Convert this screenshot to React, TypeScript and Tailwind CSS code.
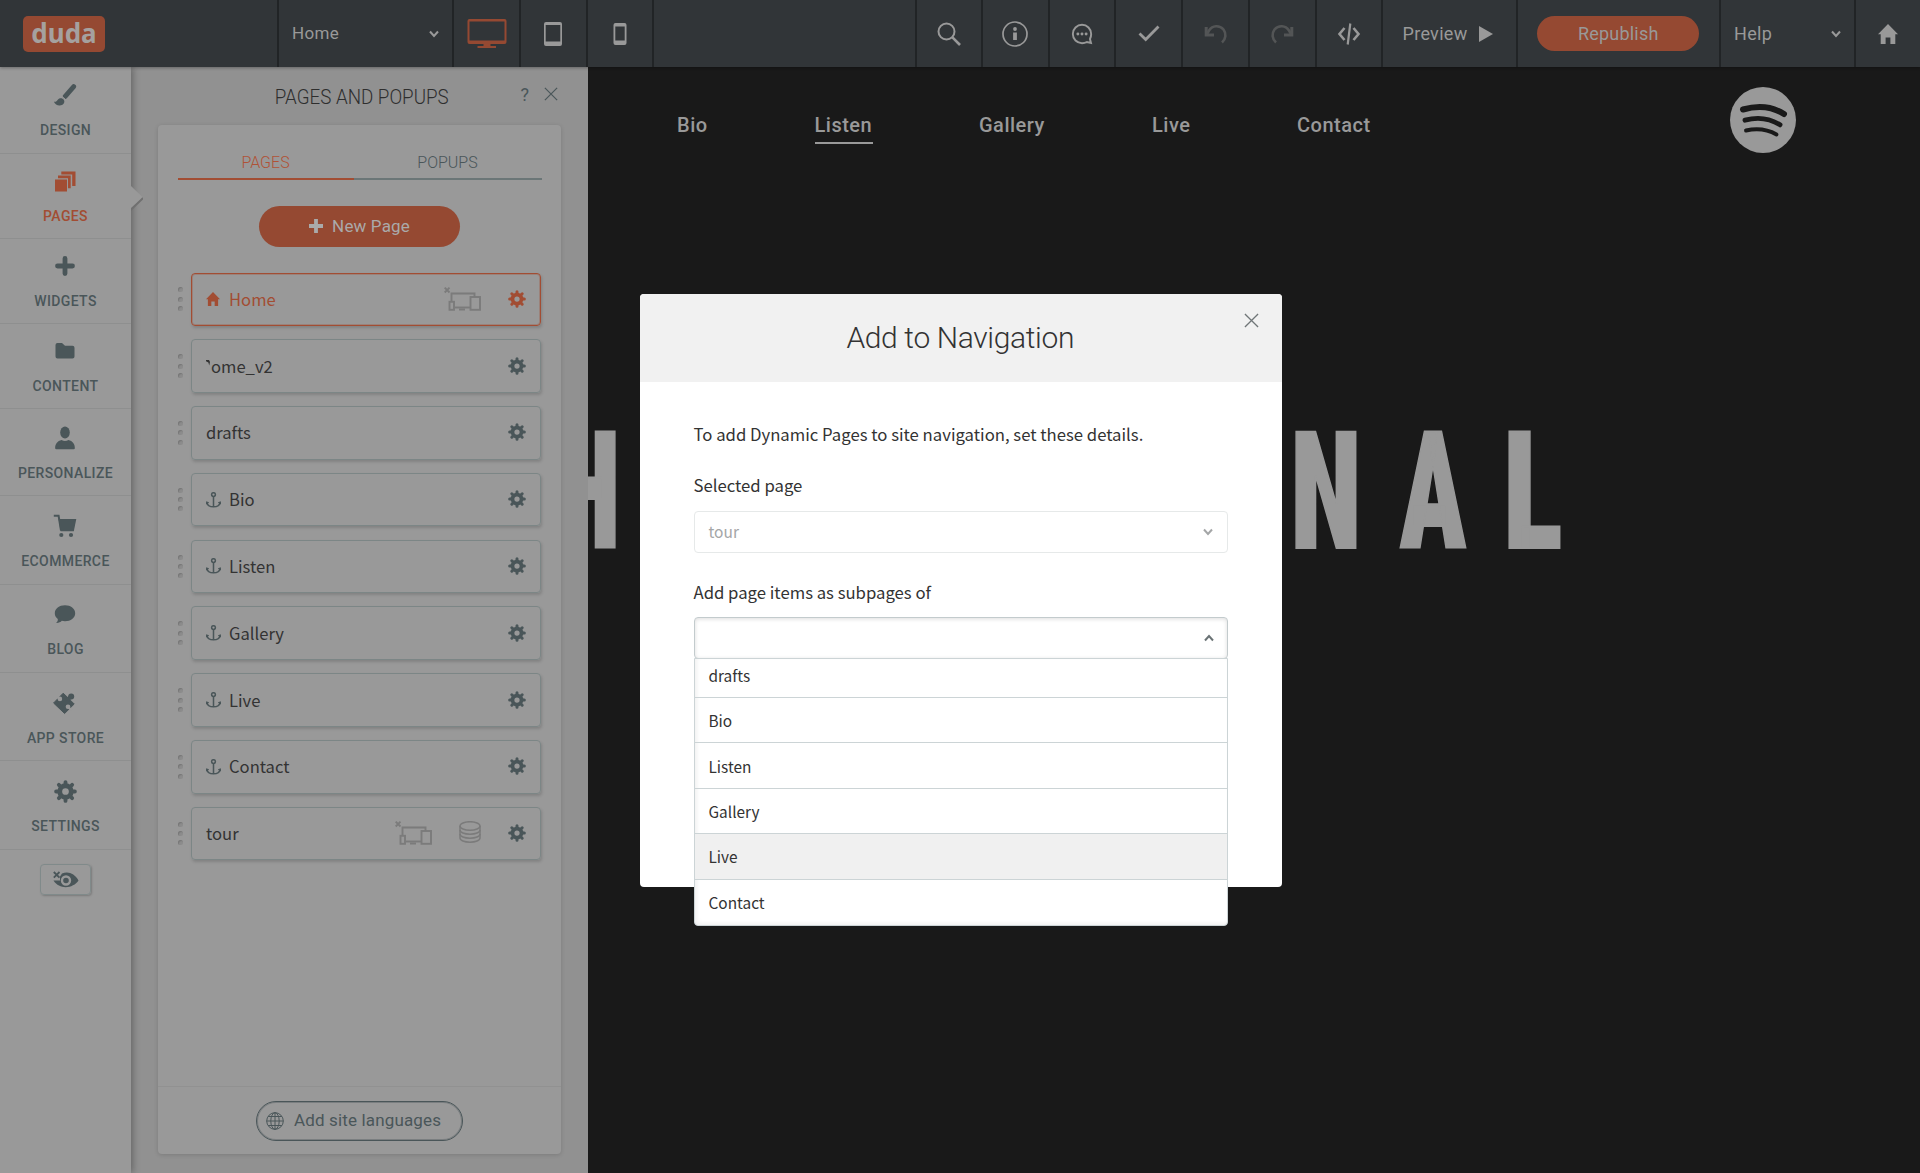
import { useState, type ReactNode } from 'react'

const ROBOTO = "font-['Roboto','Liberation_Sans',sans-serif]"
const SOURCE = "font-['Noto_Sans_CJK_SC','Noto_Sans',sans-serif]"

/* ---------- icons ---------- */

function Gear({ className = '' }: { className?: string }) {
  return (
    <svg viewBox="0 0 24 24" className={className} fill="none" stroke="currentColor">
      <circle cx="12" cy="12" r="6" strokeWidth="5" />
      {[0, 45, 90, 135].map(a => (
        <g key={a} transform={`rotate(${a} 12 12)`} strokeWidth="4" strokeLinecap="round">
          <path d="M12 2.2V5M12 19v2.8" />
        </g>
      ))}
    </svg>
  )
}

function HouseIcon({ className = '' }: { className?: string }) {
  return (
    <svg viewBox="0 0 20 20" className={className} fill="currentColor">
      <path d="M10 0 20 10.2H17.3V20H12.4V13.5H7.6V20H2.7V10.2H0Z" />
    </svg>
  )
}

function Anchor({ className = '' }: { className?: string }) {
  return (
    <svg viewBox="0 0 15 16" className={className} fill="none" stroke="currentColor" strokeWidth="1.5">
      <circle cx="7.5" cy="2.6" r="1.9" />
      <path d="M7.5 4.5V15M1 10.5C1.3 13.3 4 14.8 7.5 14.8S13.7 13.3 14 10.5" />
      <path d="M.5 12.2 .7 10 2.8 10.7M14.5 12.2 14.3 10 12.2 10.7" strokeWidth="1.2" />
    </svg>
  )
}

function Close({ className = '' }: { className?: string }) {
  return (
    <svg viewBox="0 0 16 16" className={className} fill="none" stroke="currentColor" strokeWidth="1.4">
      <path d="M1 1 15 15M15 1 1 15" />
    </svg>
  )
}

function Chevron({ className = '' }: { className?: string }) {
  return (
    <svg viewBox="0 0 10 8" className={className} fill="none" stroke="currentColor" strokeWidth="2">
      <path d="M1 1.5 5 6 9 1.5" />
    </svg>
  )
}

function Devices({ className = '' }: { className?: string }) {
  return (
    <svg viewBox="0 0 37 24" className={className} fill="none" stroke="currentColor" strokeWidth="1.9">
      <path d="M.7 .7 5.5 5.5M5.500 .7 .7 5.5" />
      <path d="M7.5 14V6.5H30.5V10" />
      <path d="M10.5 20.5H26" />
      <rect x="5.5" y="14.8" width="4.5" height="8" />
      <rect x="26.5" y="10" width="9.5" height="12.8" />
      <path d="M15 22.5H21" strokeWidth="2" />
    </svg>
  )
}

function Database({ className = '' }: { className?: string }) {
  return (
    <svg viewBox="0 0 22 22" className={className} fill="none" stroke="currentColor" strokeWidth="1.5">
      <ellipse cx="11" cy="5" rx="10" ry="4.3" />
      <path d="M1 5V17C1 19.4 5.5 21.2 11 21.2S21 19.4 21 17V5" />
      <path d="M1 9C1 11.4 5.5 13.2 11 13.2S21 11.4 21 9M1 13C1 15.4 5.5 17.2 11 17.2S21 15.4 21 13" />
    </svg>
  )
}

const sideIcons: Record<string, ReactNode> = {
  design: (
    <>
      <path d="M20.7 3.6 12.2 13.4" stroke="currentColor" strokeWidth="4.8" strokeLinecap="round" />
      <path d="M.9 18.8C3.5 19 4.1 17.8 5 16.5 6.5 14.5 9.7 14.7 11 17 12.2 19.8 10 22.3 6.8 22.5 4 22.6 2 21.3 .9 18.8Z" />
      <path d="M8.2 12.6 13.500 17.4" stroke="#999" strokeWidth="1" />
    </>
  ),
  pages: (
    <>
      <rect x="2" y="10.5" width="12" height="12" />
      <path d="M5 6.5H17.7V19.3H15V9.2H5Z" />
      <path d="M8.3 2.5H22.5V17H19.2V5.4H8.3Z" />
    </>
  ),
  widgets: <path d="M12 4.500V19.500M4.500 12H19.500" stroke="currentColor" strokeWidth="4.800" strokeLinecap="round" />,
  content: <path d="M2.5 6Q2.5 4 4.5 4H9L12 6.8H19.5Q21.5 6.8 21.5 8.8V17.5Q21.5 19.5 19.5 19.5H4.5Q2.5 19.5 2.5 17.5Z" />,
  personalize: (
    <>
      <ellipse cx="12" cy="6.5" rx="4.8" ry="6" />
      <path d="M2.2 22.5C1.8 18.5 4.5 14.8 8.6 14 10.5 15.3 13.5 15.3 15.4 14 19.5 14.8 22.2 18.5 21.8 22.5Q21.7 23.3 20.8 23.3H3.2Q2.3 23.3 2.2 22.5Z" />
    </>
  ),
  ecommerce: (
    <>
      <path d="M.8 1.8H5.6L8 16.5" fill="none" stroke="currentColor" strokeWidth="2" />
      <path d="M5.6 5H23.3L20.8 17.2H7.6Z" />
      <circle cx="8.3" cy="21" r="2.1" />
      <circle cx="18" cy="21" r="2.1" />
    </>
  ),
  blog: <path d="M12 3.2C17.7 3.2 22.2 6.7 22.2 11.2S17.7 19.2 12 19.2Q10.2 19.2 8.8 18.8C7.5 20.2 5.5 21.2 3 21 4.3 20 5 18.8 4.8 17 2.900 15.5 1.800 13.5 1.800 11.200 1.800 6.700 6.300 3.200 12 3.200Z" />,
  store: (
    <>
      <path d="M.6 12 10.200 2.200 15.200 7 17.400 9.200 21.200 13 11.600 22.500Z" stroke="currentColor" strokeWidth="1" strokeLinejoin="round" />
      <path d="M14 9.500 17.500 5.800" stroke="currentColor" strokeWidth="4" />
      <circle cx="18.200" cy="5.400" r="3" />
      <circle cx="6.900" cy="7.900" r="2.300" fill="#999" />
      <path d="M3.500 5 6.500 8" stroke="#999" strokeWidth="2.200" />
      <circle cx="15" cy="15.800" r="2.300" fill="#999" />
      <path d="M15 15.800 18.500 19.300" stroke="#999" strokeWidth="2.200" />
    </>
  ),
}

function SideIcon({ name }: { name: string }) {
  if (name === 'settings') return <Gear className="size-[23px]" />
  return <svg viewBox="0 0 24 24" className="-ml-px size-6" fill="currentColor">{sideIcons[name]}</svg>
}

/* ---------- top bar ---------- */

function Cell({ width, children, className = 'justify-center' }: { width: string; children?: ReactNode; className?: string }) {
  return (
    <div className={`flex h-full shrink-0 items-center border-l-2 border-[#212426] ${width} ${className}`}>
      {children}
    </div>
  )
}

function TopBar() {
  return (
    <header className={`relative z-10 flex h-[67px] shrink-0 items-center bg-[#313538] text-lg tracking-[0.3px] text-[#999] shadow-[0_1px_3px_rgba(0,0,0,0.3)] ${ROBOTO}`}>
      <div className="flex w-[277px] items-center pl-[23px]">
        <div className="flex h-[36px] w-[82px] items-center justify-center rounded-[5px] bg-[#954932] font-['Noto_Sans',sans-serif] text-[26px] font-bold tracking-normal text-[#a5a19f]">
          duda
        </div>
      </div>
      <Cell width="w-[175px]" className="justify-between pr-[13px] pl-[13px]">
        <span className="text-[17px]">Home</span>
        <Chevron className="h-2 w-2.5" />
      </Cell>
      <Cell width="w-[67px]">
        <svg viewBox="0 0 40 30" className="h-[30px] w-10 text-[#954932]" fill="currentColor">
          <path d="M2.5 0H37.5Q39.5 0 39.5 2V23Q39.5 25 37.5 25H23.5V27H29V29H10.5V27H16.5V25H2.5Q.5 25 .5 23V2Q.5 0 2.5 0ZM2.5 2.5V21.5H37.5V2.5Z" fillRule="evenodd" />
        </svg>
      </Cell>
      <Cell width="w-[66.500px]">
        <svg viewBox="0 0 20 24" className="h-6 w-5" fill="currentColor">
          <path d="M3 0H17Q19 0 19 2V22Q19 24 17 24H3Q1 24 1 22V2Q1 0 3 0ZM2.7 3V19.5H17.3V3Z" fillRule="evenodd" />
        </svg>
      </Cell>
      <Cell width="w-[66px]">
        <svg viewBox="0 0 14 24" className="h-6 w-3.5" fill="currentColor">
          <path d="M2.5 1H11.5Q13.5 1 13.5 3V21Q13.5 23 11.5 23H2.5Q.5 23 .5 21V3Q.5 1 2.5 1ZM2.3 4.5V18.5H11.7V4.5Z" fillRule="evenodd" />
        </svg>
      </Cell>
      <Cell width="flex-1" />
      <Cell width="w-[66px]">
        <svg viewBox="0 0 24 24" className="size-6" fill="none" stroke="currentColor" strokeWidth="2">
          <circle cx="9.5" cy="9.5" r="8" />
          <path d="M15.2 15.2 23 23" strokeWidth="2.6" />
        </svg>
      </Cell>
      <Cell width="w-[66.500px]">
        <svg viewBox="0 0 26 26" className="size-[26px]" fill="none" stroke="currentColor">
          <circle cx="13" cy="13" r="12" strokeWidth="1.7" />
          <path d="M13 11.5V19" strokeWidth="3.8" />
          <circle cx="13" cy="8" r="1.9" fill="currentColor" stroke="none" />
        </svg>
      </Cell>
      <Cell width="w-[66.500px]">
        <svg viewBox="0 0 24 24" className="size-[22px]" fill="none" stroke="currentColor" strokeWidth="2.1">
          <path d="M22 12A10 10 0 1 0 12 22Q15 22 17.3 20.7L21.8 21.8 20.7 17.5Q22 15 22 12Z" />
          <g fill="currentColor" stroke="none">
            <circle cx="7.5" cy="12" r="1.6" />
            <circle cx="12" cy="12" r="1.6" />
            <circle cx="16.5" cy="12" r="1.6" />
          </g>
        </svg>
      </Cell>
      <Cell width="w-[67px]">
        <svg viewBox="0 0 22 17" className="h-[17px] w-[22px]" fill="none" stroke="currentColor" strokeWidth="2.8">
          <path d="M1.5 8.5 7.7 14.5 20.5 1.5" />
        </svg>
      </Cell>
      <Cell width="w-[67px]">
        <svg viewBox="0 0 24 20" className="h-5 w-6 text-[#535556]" fill="none" stroke="currentColor" strokeWidth="2.6">
          <path d="M18 18.5C22 15 22.5 9.5 19.5 5.5 15.5 .8 8.500 1.2 5 6.5L3 10" />
          <path d="M2.2 3V11H10" strokeWidth="3" />
        </svg>
      </Cell>
      <Cell width="w-[66.500px]">
        <svg viewBox="0 0 24 20" className="h-5 w-6 -scale-x-100 text-[#535556]" fill="none" stroke="currentColor" strokeWidth="2.6">
          <path d="M18 18.5C22 15 22.5 9.5 19.5 5.5 15.5 .8 8.500 1.2 5 6.5L3 10" />
          <path d="M2.2 3V11H10" strokeWidth="3" />
        </svg>
      </Cell>
      <Cell width="w-[66.500px]">
        <svg viewBox="0 0 24 22" className="h-[22px] w-6" fill="none" stroke="currentColor" strokeWidth="2.6">
          <path d="M7.5 5 2.5 11 7.5 17M16.5 5 21.5 11 16.5 17" />
          <path d="M13.3 .5 10.7 21.5" strokeWidth="2.2" />
        </svg>
      </Cell>
      <Cell width="w-[134.500px]" className="pl-[19.500px]">
        <span>Preview</span>
        <svg viewBox="0 0 14 16" className="ml-[11px] h-4 w-3.5" fill="currentColor"><path d="M0 0 14 8 0 16Z" /></svg>
      </Cell>
      <Cell width="w-[203.500px]">
        <button className="h-[35px] w-[162px] rounded-full bg-[#954932] text-lg tracking-[0.2px]">Republish</button>
      </Cell>
      <Cell width="w-[135px]" className="justify-between pr-[13px] pl-[13px]">
        <span>Help</span>
        <Chevron className="h-2 w-2.5" />
      </Cell>
      <Cell width="w-[66px]">
        <HouseIcon className="size-5" />
      </Cell>
    </header>
  )
}

/* ---------- left rail ---------- */

const rail = [
  { id: 'design', label: 'DESIGN', size: 'h-[86.500px] pt-[16px]' },
  { id: 'pages', label: 'PAGES', size: 'h-[85px] pt-[15px]' },
  { id: 'widgets', label: 'WIDGETS', size: 'h-[85px] pt-[15px]' },
  { id: 'content', label: 'CONTENT', size: 'h-[85px] pt-[15px]' },
  { id: 'personalize', label: 'PERSONALIZE', size: 'h-[87px] pt-[17px]' },
  { id: 'ecommerce', label: 'ECOMMERCE', size: 'h-[89px] pt-[18.500px]' },
  { id: 'blog', label: 'BLOG', size: 'h-[88px] pt-[17px]' },
  { id: 'store', label: 'APP STORE', size: 'h-[88.500px] pt-[18px]' },
  { id: 'settings', label: 'SETTINGS', size: 'h-[88.500px] pt-[19px]' },
]

function Rail() {
  const [active, setActive] = useState('pages')
  return (
    <nav className={`relative z-[5] flex w-[131px] shrink-0 flex-col items-center bg-[#999] shadow-[2px_0_7px_rgba(0,0,0,0.3)] ${ROBOTO}`}>
      {rail.map(item => (
        <button
          key={item.id}
          onClick={() => setActive(item.id)}
          className={`flex w-full flex-col items-center border-b border-[#8e8f8f] ${item.size} ${active === item.id ? 'text-[#a24d33]' : 'text-[#4a5659]'}`}
        >
          <SideIcon name={item.id} />
          <span className="mt-[13px] text-sm leading-5 font-medium tracking-[0.38px]">{item.label}</span>
        </button>
      ))}
      <button className="mt-[14.500px] flex h-[31px] w-[51px] items-center justify-center rounded border border-[#808a8a] text-[#4a5659] shadow-[1px_1px_2px_rgba(0,0,0,0.2)]">
        <svg viewBox="0 0 26 18" className="h-[18px] w-[26px]" fill="none" stroke="currentColor">
          <path d="M9 2.5C15.5 0 21.5 2.5 25.5 9.5 20.5 17.2 7 19.5 .5 9.5H7V5.500Z" fill="currentColor" stroke="none" />
          <path d="M.8 1 6.5 6.7M6.500 1 .8 6.7" strokeWidth="1.8" />
          <circle cx="13" cy="9.500" r="4" strokeWidth="2.400" stroke="#999" />
        </svg>
      </button>
      {/* pointer of the active tab */}
      <svg viewBox="0 0 12 26" className="absolute top-[118px] left-[131px] h-[26px] w-3">
        <path d="M-1 25.500 12 13" stroke="#707070" strokeWidth="2" />
        <path d="M-1 0 11.5 12-1 24Z" fill="#999" />
      </svg>
    </nav>
  )
}

/* ---------- pages panel ---------- */

type Page = { name: string; icon?: 'home' | 'anchor'; devices?: boolean; data?: boolean; clipped?: boolean }

const pages: Page[] = [
  { name: 'Home', icon: 'home', devices: true },
  { name: 'ome_v2', clipped: true },
  { name: 'drafts' },
  { name: 'Bio', icon: 'anchor' },
  { name: 'Listen', icon: 'anchor' },
  { name: 'Gallery', icon: 'anchor' },
  { name: 'Live', icon: 'anchor' },
  { name: 'Contact', icon: 'anchor' },
  { name: 'tour', devices: true, data: true },
]

function PageRow({ page }: { page: Page }) {
  const home = page.icon === 'home'
  return (
    <li className="flex h-[53.500px] items-center">
      <div className="flex w-[13.500px] flex-col gap-[4.300px]">
        {[0, 1, 2].map(i => (
          <span key={i} className="size-[5px] rounded-full bg-[#8c8c8c] shadow-[inset_1px_1px_1px_#777]" />
        ))}
      </div>
      <div className={`flex h-full flex-1 items-center rounded border pr-[14.500px] pl-3.5 shadow-[1px_2px_3px_rgba(0,0,0,0.15)] ${home ? 'border-[#a24d33] text-[#a24d33] ring-1 ring-[#a24d33]/30 ring-inset' : 'border-[#7c8686] text-[#333]'}`}>
        {home && <HouseIcon className="mr-[9px] size-3.5" />}
        {page.icon === 'anchor' && <Anchor className="mr-2 h-4 w-[15px] text-[#4a5659]" />}
        {page.clipped && <span className="mr-px mb-[7px] h-[6px] w-[4px] bg-[#333] [clip-path:polygon(0_0,70%_0,100%_40%,80%_100%,60%_50%,0_30%)]" />}
        <span className={`-mt-px text-[16.600px] leading-6 ${SOURCE}`}>{page.name}</span>
        <span className="flex-1" />
        {page.devices && <Devices className="-mt-px mr-[27px] h-6 w-[37px] text-[#7b7b7b]" />}
        {page.data && <Database className="-mt-[3px] mr-[26.500px] h-[22px] w-[22px] text-[#7b7b7b]" />}
        <Gear className={`-mt-px size-[18px] ${home ? '' : 'text-[#4a5659]'}`} />
      </div>
    </li>
  )
}

function PagesPanel() {
  return (
    <section className={`flex w-[457px] shrink-0 flex-col bg-[#919191] pr-[27px] pb-[19px] pl-[27px] ${ROBOTO}`}>
      <div className="flex h-[58px] items-center">
        <div className="w-[45px]" />
        <h2 className="flex-1 scale-x-[0.915] pt-0.5 text-center text-[20.500px] font-light whitespace-nowrap text-[#2e2e2e]">PAGES AND POPUPS</h2>
        <span className="pb-1 text-[18px] text-[#4a5659]">?</span>
        <Close className="mr-[3px] mb-1 ml-[15px] h-3.5 w-3.5 text-[#4a5659]" />
      </div>
      <div className="flex flex-1 flex-col rounded bg-[#999] shadow-[0_1px_4px_rgba(0,0,0,0.15)]">
        <div className="mt-5 ml-[19.500px] flex w-[364px] text-base font-light">
          <button className="h-[35px] w-[176px] border-b-2 border-[#a24d33] pt-0.5 text-[#b05236]">PAGES</button>
          <button className="h-[35px] flex-1 border-b-2 border-[#6b7677] pt-0.5 text-[#4a5659]">POPUPS</button>
        </div>
        <button className="mt-[26px] ml-[101px] flex h-[40.500px] w-[201px] items-center justify-center rounded-full bg-[#954932] text-[17px] tracking-[0.15px] text-[#aaa]">
          <svg viewBox="0 0 14 14" className="mr-[9px] size-3.5"><path d="M7 0V14M0 7H14" stroke="currentColor" strokeWidth="3.8" /></svg>
          New Page
        </button>
        <ul className="mt-[26px] ml-[19.500px] flex w-[363.500px] flex-col gap-[13.300px]">
          {pages.map(p => <PageRow key={p.name} page={p} />)}
        </ul>
        <div className="mt-auto flex h-[68.500px] justify-center border-t border-[#919191] pt-[14px]">
          <button className="flex h-10 w-[207px] items-center rounded-full border border-[#4a5659] pl-[9px] text-[17px] tracking-[0.15px] text-[#4a5659] ring-1 ring-[#4a5659]/40 ring-inset">
            <svg viewBox="0 0 18 18" className="mr-2.5 size-[18px]" fill="none" stroke="currentColor">
              <circle cx="9" cy="9" r="8.3" />
              <ellipse cx="9" cy="9" rx="4.2" ry="8.3" />
              <path d="M9 .7V17.3M.7 9H17.3M2.2 4.5H15.8M2.2 13.5H15.8" />
            </svg>
            Add site languages
          </button>
        </div>
      </div>
    </section>
  )
}

/* ---------- site canvas ---------- */

function SitePreview() {
  return (
    <main className={`flex min-w-0 flex-1 flex-col overflow-hidden bg-[#191919] text-[#999] ${ROBOTO}`}>
      <div className="flex pt-[19.500px] pr-[124.500px] pl-[89px]">
        <nav className="mt-[26px] flex h-8 flex-1 text-xl leading-6 font-medium tracking-[0.5px]">
          <a className="w-[137.500px]">Bio</a>
          <a className="mr-[106px] h-[31px] w-[58.500px] border-b-2 border-[#999]">Listen</a>
          <a className="w-[173px]">Gallery</a>
          <a className="w-[145px]">Live</a>
          <a>Contact</a>
        </nav>
        <svg viewBox="0 0 66 66" className="size-[66px]" fill="none" stroke="#191919" strokeLinecap="round">
          <circle cx="33" cy="33" r="33" fill="#999" stroke="none" />
          <path d="M13 22.5C28 18.2 43 20 54 27" strokeWidth="6" />
          <path d="M15 33.2C28 29.6 40 31.5 50 37.8" strokeWidth="4.9" />
          <path d="M16 43.5C27 41 37 42 46.5 47.5" strokeWidth="3.9" />
        </svg>
      </div>
      <h1 className="mt-[249.500px] -ml-[53px] flex text-[164px] leading-[180px] font-black [-webkit-text-stroke:2px_#999] [font-stretch:75%]">
        <span className="w-[100px] scale-x-[0.71] text-center">H</span>
        <span className="ml-[641px] w-[100px] scale-x-[0.71] text-center">N</span>
        <span className="ml-[5px] w-[104px] scale-x-[0.67] text-center">A</span>
        <span className="-ml-[2.500px] w-[100px] scale-x-[0.755] text-center">L</span>
      </h1>
    </main>
  )
}

/* ---------- modal ---------- */

const options = ['drafts', 'Bio', 'Listen', 'Gallery', 'Live', 'Contact']

function NavigationModal() {
  const [hovered, setHovered] = useState('Live')
  return (
    <div className={`absolute top-[293.500px] left-[640px] z-20 flex h-[593.500px] w-[641.500px] flex-col rounded bg-white text-[#333] ${SOURCE}`}>
      <div className="flex h-[88px] shrink-0 rounded-t bg-[#f1f1f1]">
        <div className="w-[47px]" />
        <h3 className={`flex-1 pt-6 text-center text-[30px] leading-[40px] font-light tracking-[-0.350px] ${ROBOTO}`}>Add to Navigation</h3>
        <Close className="mt-[19.500px] mr-[23px] ml-[10px] size-[15px] text-[#707678]" />
      </div>
      <div className="flex flex-col px-[53.500px] text-[16.720px] leading-6">
        <p className="mt-10 whitespace-nowrap">To add Dynamic Pages to site navigation, set these details.</p>
        <label className="mt-[27px]">Selected page</label>
        <div className="mt-[14px] flex h-[42.500px] items-center justify-between rounded border border-[#e6e9e9] px-[14px] text-[15.500px] text-[#a4a6a7]">
          <span className="-mt-px">tour</span>
          <Chevron className="h-2 w-2.5" />
        </div>
        <label className="mt-[26.500px]">Add page items as subpages of</label>
        <div className="relative mt-[13.500px] flex h-[42px] items-center justify-end rounded border border-[#c3cbcd] pr-[13px] shadow-[inset_0_1px_4px_rgba(0,0,0,0.14)]">
          <Chevron className="h-2 w-2.5 -scale-y-100 text-[#6a7375]" />
          <ul className="absolute top-[40px] -right-px -left-px rounded-b border border-[#ccd4d6] bg-white text-[15.400px] shadow-[inset_2px_-2px_4px_rgba(0,0,0,0.06)]">
            {options.map(o => (
              <li
                key={o}
                onMouseEnter={() => setHovered(o)}
                className={`flex items-center border-b border-[#ccd4d6] pl-[14px] last:border-b-0 ${o === 'drafts' ? 'h-[39px] pb-[6px]' : 'h-[45.400px]'} ${hovered === o ? 'bg-[#f0f0f0]' : ''}`}
              >
                {o}
              </li>
            ))}
          </ul>
        </div>
      </div>
    </div>
  )
}

export default function App() {
  return (
    <div className="relative flex h-[1173px] w-[1920px] flex-col overflow-hidden bg-[#191919]">
      <TopBar />
      <div className="flex min-h-0 flex-1">
        <Rail />
        <PagesPanel />
        <SitePreview />
      </div>
      <NavigationModal />
    </div>
  )
}
